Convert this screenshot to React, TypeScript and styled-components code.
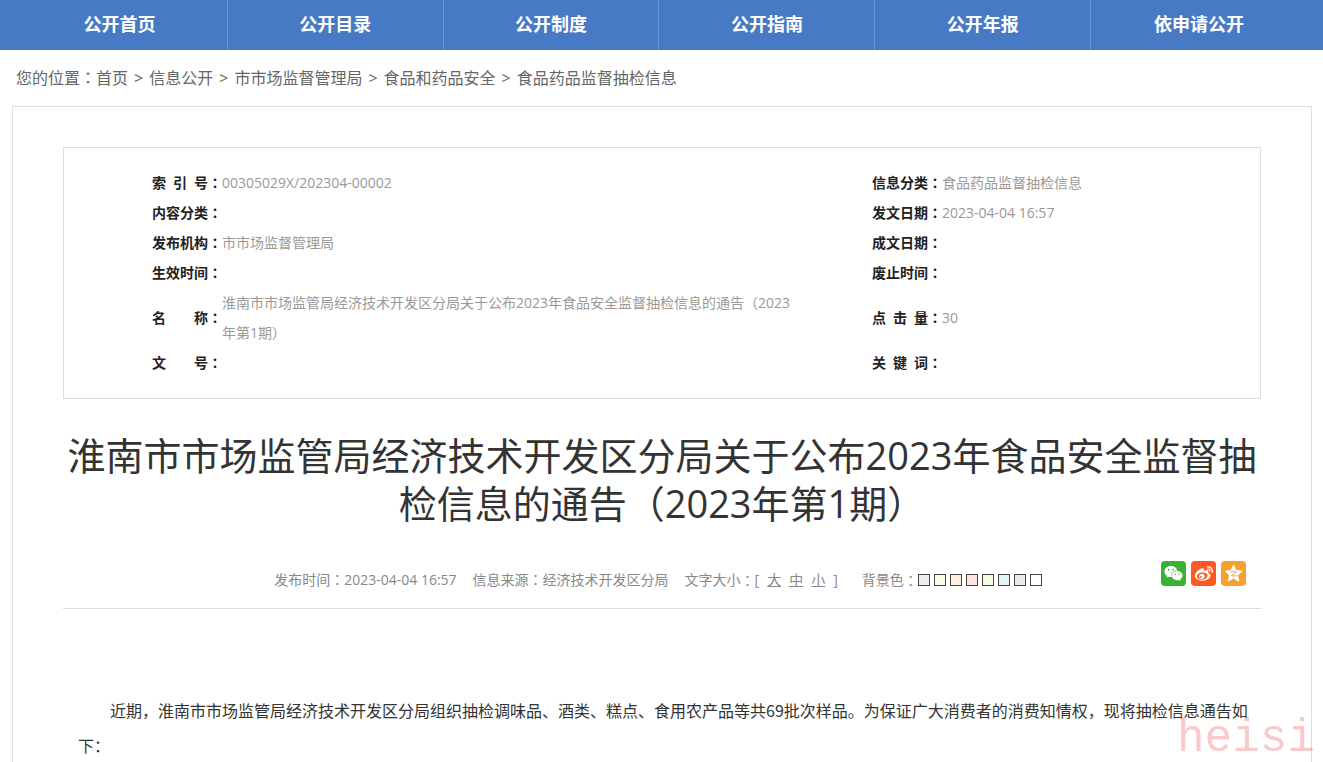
import React, { useState } from "react";
import styled, { createGlobalStyle } from "styled-components";
import { FaWeibo, FaWeixin } from "react-icons/fa";

const GlobalStyle = createGlobalStyle`
  * { box-sizing: border-box; }
  body {
    margin: 0;
    background: #fff;
    color: #333;
    font-family: "Open Sans", "Noto Sans CJK SC", sans-serif;
    font-size: 14px;
  }
  a { color: inherit; text-decoration: none; }
`;

const Nav = styled.nav`
  display: grid;
  grid-template-columns: repeat(6, 1fr);
  height: 50px;
  padding: 0 16px 0 12px;
  background: #477ac5;
`;

const NavLink = styled.a`
  border-right: 1px solid #6b96d4;
  color: #fff;
  font-size: 18px;
  font-weight: 700;
  line-height: 48px;
  text-align: center;
  &:last-child { border-right: 0; }
`;

const Breadcrumb = styled.nav`
  display: flex;
  gap: 6px;
  padding: 16px;
  color: #666;
  font-size: 16px;
  line-height: 24px;
`;

const Colon = styled.span`
  font-family: "Noto Sans CJK TC", sans-serif;
  line-height: 1;
`;

const Card = styled.main`
  margin: 0 11px 0 12px;
  padding: 40px 50px;
  border: 1px solid #ddd;
`;

const InfoBox = styled.section`
  padding: 20px 0;
  border: 1px solid #ddd;
`;

const InfoTable = styled.table`
  width: 100%;
  border-collapse: collapse;
  table-layout: fixed;
  line-height: 30px;
`;

const Col = styled.col<{ $width?: number }>`
  width: ${(p) => (p.$width ? `${p.$width}px` : "auto")};
`;

const Label = styled.th`
  padding: 0;
  color: #222;
  font-weight: 700;
  text-align: right;
  white-space: nowrap;
`;

const Value = styled.td`
  padding: 0;
  color: #999;
`;

const Title = styled.h1`
  margin: 32px 0 0;
  font-size: 38px;
  font-weight: 400;
  line-height: 48px;
  text-align: center;
`;

const MetaBar = styled.div`
  display: grid;
  grid-template-columns: 1fr auto 1fr;
  align-items: end;
  margin-top: 34px;
  padding-bottom: 18px;
  border-bottom: 1px solid #ddd;
`;

const Meta = styled.div`
  display: flex;
  grid-column: 2;
  gap: 16px;
  padding-right: 8px;
  color: #888;
  line-height: 20px;
  white-space: nowrap;
`;

const MetaGroup = styled.div`
  display: flex;
  align-items: center;
`;

const SizeList = styled.span`
  display: flex;
  gap: 8px;
  margin-right: 8px;
`;

const SizeButton = styled.button`
  padding: 0;
  border: 0;
  background: none;
  color: inherit;
  font: inherit;
  text-decoration: underline;
  cursor: pointer;
`;

const Swatches = styled.span`
  display: flex;
  gap: 4px;
`;

const Swatch = styled.button<{ $color: string }>`
  width: 12px;
  height: 12px;
  padding: 0;
  border: 1px solid #444;
  background: ${(p) => p.$color};
  cursor: pointer;
`;

const Share = styled.div`
  display: flex;
  justify-content: flex-end;
  gap: 5px;
  padding: 0 15px 4px 0;
`;

const ShareLink = styled.a<{ $color: string }>`
  display: flex;
  align-items: center;
  justify-content: center;
  width: 25px;
  height: 25px;
  border-radius: 4px;
  background: ${(p) => p.$color};
  color: #fff;
`;

const Article = styled.article<{ $size: number; $background: string }>`
  margin-top: 84px;
  padding: 0 10px 0 15px;
  background: ${(p) => p.$background};
  font-family: "Noto Sans CJK SC", sans-serif;
  font-size: ${(p) => p.$size}px;
  line-height: 35px;
`;

const Paragraph = styled.p`
  margin: 0;
  text-indent: 2em;
`;

const Watermark = styled.div`
  position: fixed;
  right: 8px;
  bottom: 0;
  color: rgba(240, 90, 90, 0.32);
  font-family: "Liberation Mono", monospace;
  font-size: 46px;
  line-height: 46px;
  pointer-events: none;
`;

const navItems = ["公开首页", "公开目录", "公开制度", "公开指南", "公开年报", "依申请公开"];
const crumbs = ["首页", "信息公开", "市市场监督管理局", "食品和药品安全", "食品药品监督抽检信息"];
const title = "淮南市市场监管局经济技术开发区分局关于公布2023年食品安全监督抽检信息的通告（2023年第1期）";

const infoRows = [
  ["索\u2002引\u2002号", "00305029X/202304-00002", "信息分类", "食品药品监督抽检信息"],
  ["内容分类", "", "发文日期", "2023-04-04 16:57"],
  ["发布机构", "市市场监督管理局", "成文日期", ""],
  ["生效时间", "", "废止时间", ""],
  ["名\u3000\u3000称", title, "点\u2002击\u2002量", "30"],
  ["文\u3000\u3000号", "", "关\u2002键\u2002词", ""],
];

const textSizes = [
  { name: "大", size: 20 },
  { name: "中", size: 18 },
  { name: "小", size: 16 },
];

const backgrounds = ["#eeeeee", "#f8fbe6", "#fcefdf", "#fae3e3", "#f5fce0", "#e0f6ee", "#e8e8e8", "#ffffff"];

function QzoneIcon() {
  return (
    <svg width="19" height="19" viewBox="0 0 20 20" aria-hidden="true">
      <path
        d="M10 1.2l2.6 5.7 6.2.7-4.6 4.2 1.3 6.2L10 14.9 4.5 18l1.3-6.2L1.2 7.6l6.2-.7z"
        fill="#fff"
        stroke="#fff"
        strokeWidth="1"
        strokeLinejoin="round"
      />
      <path d="M7 8.3c2-.4 4-.4 6 0l-5.2 4c2 .4 4 .4 5.800 0" fill="none" stroke="#f5a02f" strokeWidth="1" />
    </svg>
  );
}

export default function App() {
  const [size, setSize] = useState(16);
  const [background, setBackground] = useState("#ffffff");

  return (
    <>
      <GlobalStyle />
      <Nav>
        {navItems.map((item) => (
          <NavLink href="#" key={item}>{item}</NavLink>
        ))}
      </Nav>
      <Breadcrumb>
        <span>
          您的位置<Colon>：</Colon>
          <a href="#">{crumbs[0]}</a>
        </span>
        {crumbs.slice(1).map((crumb) => (
          <React.Fragment key={crumb}>
            <span>&gt;</span>
            <a href="#">{crumb}</a>
          </React.Fragment>
        ))}
      </Breadcrumb>
      <Card>
        <InfoBox>
          <InfoTable>
            <colgroup>
              <Col $width={158} />
              <Col />
              <Col $width={144} />
              <Col $width={318} />
            </colgroup>
            <tbody>
              {infoRows.map(([label, value, label2, value2]) => (
                <tr key={label}>
                  <Label scope="row">{label}<Colon>：</Colon></Label>
                  <Value>{value}</Value>
                  <Label scope="row">{label2}<Colon>：</Colon></Label>
                  <Value>{value2}</Value>
                </tr>
              ))}
            </tbody>
          </InfoTable>
        </InfoBox>
        <Title>{title}</Title>
        <MetaBar>
          <Meta>
            <span>发布时间<Colon>：</Colon>2023-04-04 16:57</span>
            <span>信息来源<Colon>：</Colon>经济技术开发区分局</span>
            <MetaGroup>
              文字大小<Colon>：</Colon>
              <SizeList>
                <span>[</span>
                {textSizes.map((option) => (
                  <SizeButton type="button" key={option.name} onClick={() => setSize(option.size)}>
                    {option.name}
                  </SizeButton>
                ))}
                <span>]</span>
              </SizeList>
            </MetaGroup>
            <MetaGroup>
              背景色<Colon>：</Colon>
              <Swatches>
                {backgrounds.map((color) => (
                  <Swatch
                    type="button"
                    key={color}
                    $color={color}
                    aria-label={color}
                    onClick={() => setBackground(color)}
                  />
                ))}
              </Swatches>
            </MetaGroup>
          </Meta>
          <Share>
            <ShareLink href="#" $color="#3ab133" aria-label="微信"><FaWeixin size={19} /></ShareLink>
            <ShareLink href="#" $color="#fc5a22" aria-label="微博"><FaWeibo size={18} /></ShareLink>
            <ShareLink href="#" $color="#f5a02f" aria-label="QQ空间"><QzoneIcon /></ShareLink>
          </Share>
        </MetaBar>
        <Article $size={size} $background={background}>
          <Paragraph>
            近期，淮南市市场监管局经济技术开发区分局组织抽检调味品、酒类、糕点、食用农产品等共69批次样品。为保证广大消费者的消费知情权，现将抽检信息通告如下：
          </Paragraph>
        </Article>
      </Card>
      <Watermark>heisi</Watermark>
    </>
  );
}
